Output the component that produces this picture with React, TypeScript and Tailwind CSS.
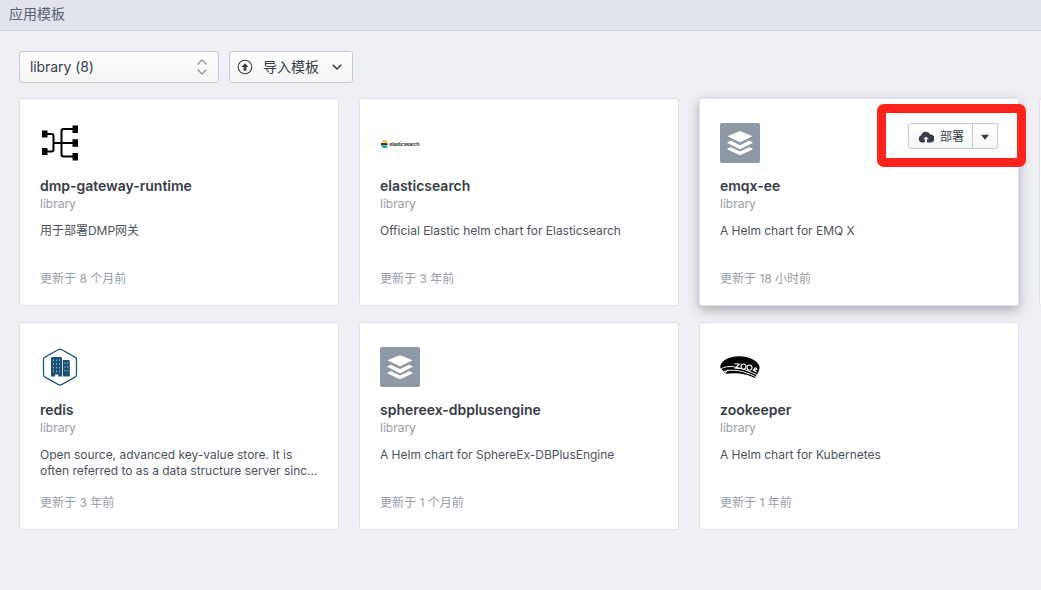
import type { ReactNode } from "react";

function StackIcon() {
  return (
    <div className="flex size-10 items-center justify-center rounded-[2px] bg-[#8f99a6]">
      <svg width="40" height="40" viewBox="0 0 40 40" fill="#fff">
        <path d="M20 8l12.500 5.300L20 19.200 7.500 13.300z" />
        <path d="M7.500 19.100l3.500-1.300L20 22.300l9-4.500 3.500 1.300v.8L20 26.200 7.500 19.900z" />
        <path d="M7.500 25.600l3.500-1.300L20 28.600l9-4.300 3.500 1.300v.8L20 32.200 7.500 26.400z" />
      </svg>
    </div>
  );
}

function GatewayIcon() {
  return (
    <svg width="40" height="40" viewBox="0 0 40 40">
      <g fill="none" stroke="#000" strokeWidth="2">
        <path d="M5 11h6.500a2 2 0 0 1 2 2v13.500a2 2 0 0 1-2 2H5M13.500 20H36M35 6H23.500a2 2 0 0 0-2 2v23.500a2 2 0 0 0 2 2H35" />
      </g>
      <path d="M2 7.500h5.500v7H2zM2 25h5.500v7H2zM32.500 2.500H38v7.500h-5.500zM32.500 16.300H38v7.500h-5.500zM32.500 30H38v7.500h-5.500z" />
    </svg>
  );
}

function ElasticIcon() {
  return (
    <div className="flex h-10 w-10 items-center pt-px">
      <svg width="9" height="10" viewBox="0 0 9 10" className="shrink-0">
        <path d="M1.300 3.400C2.100 1.800 3.400 1.200 4.600 1.200S7.300 1.900 8 3.400z" fill="#fdb92c" />
        <path d="M1 3.900h5.200a1.300 1.300 0 0 1 0 2.600H1z" fill="#343741" />
        <path d="M1.300 7H8C7.300 8.500 5.800 9.200 4.600 9.200S2.100 8.600 1.300 7z" fill="#07b5a9" />
      </svg>
      <span className="pl-[0.5px] text-[5px] leading-[8px] font-semibold tracking-[-0.2px] text-[#222]">elasticsearch</span>
    </div>
  );
}

function RedisIcon() {
  return (
    <svg width="40" height="40" viewBox="0 0 40 40">
      <path d="M18.500 2.500q1.500-.8 3 0l13.500 7.600q1.500.8 1.500 2.500v15q0 1.700-1.500 2.500l-13.500 7.500q-1.500.8-3 0L5 30.100q-1.500-.8-1.500-2.500v-15q0-1.700 1.500-2.500z" fill="#fff" stroke="#1d577d" strokeWidth="1.300" />
      <path d="M11 11l1-1h9l1 1v18.500h-3.700V27.500h-3.200v2H11zM22.800 13h6l1 1v15.500h-7z" fill="#1b5076" />
      <path d="M13.500 12.500v13M16.500 12.500v13M19.500 12.500v13M25 15.500v10M27.800 15.500v10" stroke="#9db9ca" strokeWidth="1" strokeDasharray="1.500 2.200" />
    </svg>
  );
}

function ZooIcon() {
  return (
    <svg width="40" height="40" viewBox="0 0 40 40">
      <path d="M.5 18.500C2 13 10 9.200 19 9.200c10 0 19 4.500 20.500 10.300.5 2-.7 4.200-1.500 6.200l-3.500 5.300c-4.500-2.600-10-3.900-15.500-4.500-5-.5-9-.2-13.200.3L.8 21.300C.2 20.500.2 19.500.5 18.500z" />
      <path d="M1.500 21.500C7 18.700 13 19.300 19 20.900c6.500 1.700 12.500 4.300 17.500 6.700" fill="none" stroke="#fff" strokeWidth="1" />
      <path d="M4 24.500c7-2.300 15-1.200 21 .9 4 1.300 7.500 2.500 10 4.100M5 26.500l3-4" fill="none" stroke="#fff" strokeWidth="1" />
      <g fill="#000" stroke="#fff" strokeWidth="1.100">
        <path d="M14.500 16.800l5 .3-4.200 4 5 .7" fill="none" />
        <ellipse cx="23.500" cy="19.600" rx="2.500" ry="2.600" />
        <ellipse cx="29.500" cy="20.600" rx="2.500" ry="2.600" />
        <path d="M35.500 20.500l-2.200 2.900 3.400 1.600M35.500 20.500l1.500 1.700-3.500 1.400" fill="none" />
      </g>
    </svg>
  );
}

type Chart = { name: string; description: string; updated: string; icon: ReactNode; active?: boolean };

const charts: Chart[] = [
  { name: "dmp-gateway-runtime", description: "用于部署DMP网关", updated: "8 个月前", icon: <GatewayIcon /> },
  { name: "elasticsearch", description: "Official Elastic helm chart for Elasticsearch", updated: "3 年前", icon: <ElasticIcon /> },
  { name: "emqx-ee", description: "A Helm chart for EMQ X", updated: "18 小时前", icon: <StackIcon />, active: true },
  { name: "redis", description: "Open source, advanced key-value store. It is\noften referred to as a data structure server sinc…", updated: "3 年前", icon: <RedisIcon /> },
  { name: "sphereex-dbplusengine", description: "A Helm chart for SphereEx-DBPlusEngine", updated: "1 个月前", icon: <StackIcon /> },
  { name: "zookeeper", description: "A Helm chart for Kubernetes", updated: "1 年前", icon: <ZooIcon /> },
];

function DeployButton() {
  return (
    <div className="absolute top-[5px] -right-[8px] flex h-[63px] w-[149px] items-center rounded-[7px] border-[9px] border-[#ff231b] pl-[22px]">
      <div className="flex h-[26px] w-[90px] rounded-[3px] border border-[#c4cbd7] bg-linear-to-b from-white to-[#f5f6f8] text-[12px] text-[#363d48]">
        <button className="flex w-16 items-center gap-[6px] border-r border-[#c4cbd7] pl-[9px]">
          <svg width="16" height="12" viewBox="0 0 16 12" className="shrink-0 translate-y-px">
            <path d="M4 11.500A3.800 3.800 0 0 1 3.200 4.200 4.900 4.900 0 0 1 12.300 3.500 4 4 0 0 1 12.500 11.500H9V8.300h1.800L8 5.500 5.200 8.300H7v3.200z" fill="#363d48" />
          </svg>
          <span className="pt-[2px] whitespace-nowrap">部署</span>
        </button>
        <button className="flex flex-1 items-center justify-center" aria-label="More">
          <svg width="8" height="6" viewBox="0 0 8 6" className="translate-y-px"><path d="M0 .7h8L4 5.700z" fill="#363d48" /></svg>
        </button>
      </div>
    </div>
  );
}

function ChartCard({ chart }: { chart: Chart }) {
  return (
    <article className={`relative h-[208px] rounded-[3px] border border-[#dfe3ea] bg-white px-5 pt-6 text-[12px] leading-4 ${chart.active ? "shadow-[0_4px_12px_rgba(54,67,77,0.38)]" : ""}`}>
      <div className="h-10">{chart.icon}</div>
      <h2 className="mt-[13px] text-[14px] leading-5 font-semibold tracking-[-0.02px] text-[#363d48]">{chart.name}</h2>
      <p className="text-[#949eab]">library</p>
      <p className="mt-[11px] -mr-2 h-8 tracking-[-0.015px] whitespace-pre-line text-[#4c5360]">{chart.description}</p>
      <p className="mt-4 text-[#949eab]">更新于 {chart.updated}</p>
      {chart.active && <DeployButton />}
    </article>
  );
}

export default function App() {
  return (
    <main className="h-[590px] w-[1041px] overflow-hidden bg-[#eff0f5] font-['Inter','Noto_Sans_CJK_SC',sans-serif] text-[#363d48]">
      <header className="flex h-[31px] items-center border-b border-[#cbd5e2] bg-[#e1e4ed] pb-1 pl-[9px] text-[14px] text-[#596170]">应用模板</header>
      <div className="flex gap-[10px] pt-5 pl-[19px] text-[14px]">
        <button className="flex h-8 w-[200px] items-center justify-between rounded-[3px] border border-[#c4cbd7] bg-linear-to-b from-white to-[#f4f4f5] pr-[11px] pl-[10px]">
          <span className="pb-[2px] tracking-[-0.08px]">library (8)</span>
          <svg width="10" height="16" viewBox="0 0 10 16" fill="none" stroke="#8f99a6" strokeWidth="1.400" strokeLinecap="round" strokeLinejoin="round"><path d="M1 5l4-4 4 4M1 11l4 4 4-4" /></svg>
        </button>
        <button className="flex h-8 w-[124px] items-center rounded-[3px] border border-[#c4cbd7] bg-linear-to-b from-white to-[#f4f4f5] pl-[7px]">
          <svg width="16" height="16" viewBox="0 0 16 16"><circle cx="8" cy="8" r="6.800" fill="none" stroke="#363d48" strokeWidth="1.100" /><path d="M8 4.200l3.600 3.900H9.400v3.600H6.600V8.100H4.400z" fill="#363d48" /></svg>
          <span className="ml-[10px] pb-[2px]">导入模板</span>
          <svg className="ml-[13px]" width="10" height="7" viewBox="0 0 10 7" fill="none" stroke="#363d48" strokeWidth="1.600" strokeLinecap="round" strokeLinejoin="round"><path d="M1.200 1.200L5 5l3.800-3.800" /></svg>
        </button>
      </div>
      <div className="flex gap-5 pt-[15px] pl-[19px]">
        <section className="grid shrink-0 grid-cols-[320px_320px_320px] gap-x-5 gap-y-4">
          {charts.map((chart) => <ChartCard key={chart.name} chart={chart} />)}
        </section>
        <div className="h-[208px] w-80 shrink-0 rounded-[3px] border border-[#dfe3ea] bg-white" />
      </div>
    </main>
  );
}
